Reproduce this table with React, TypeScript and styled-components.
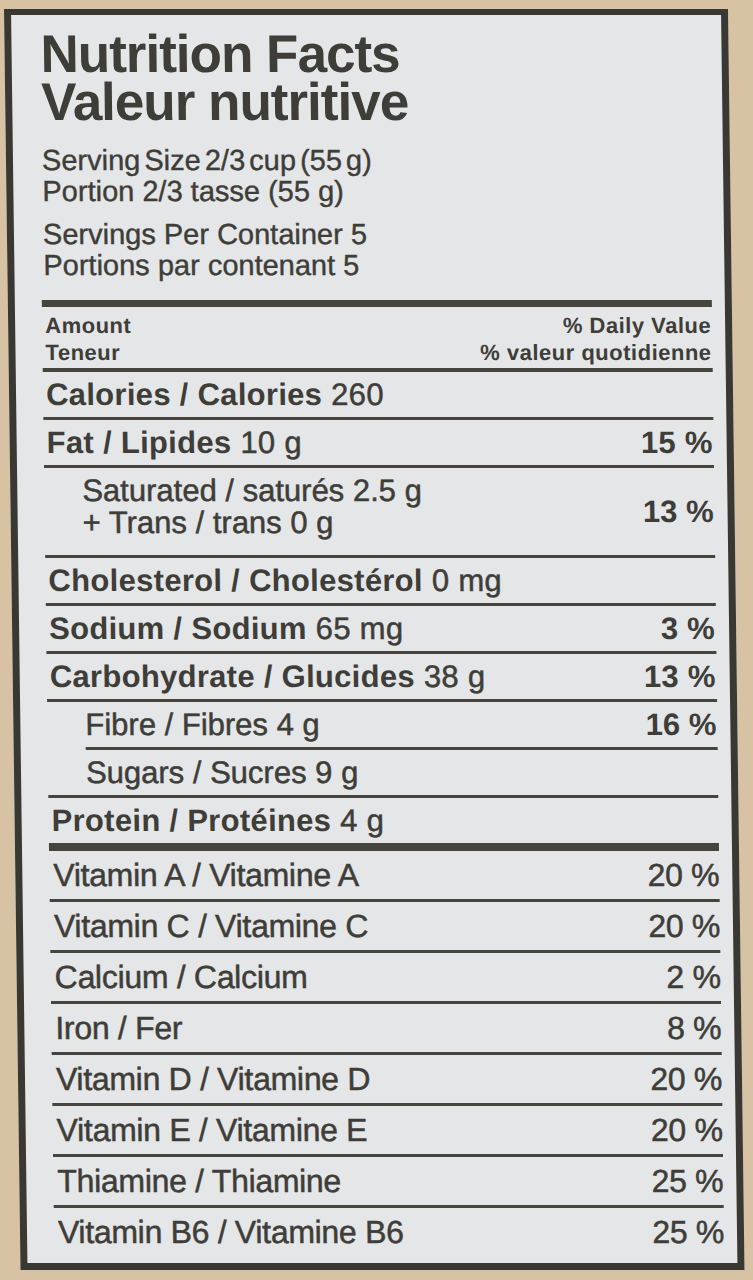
import React from "react";
import styled, { createGlobalStyle } from "styled-components";

const INK = "#3e3d38";

const GlobalStyle = createGlobalStyle`
  html, body { margin: 0; padding: 0; background: #d8c2a4; }
  body {
    font-family: "Liberation Sans", Arial, Helvetica, sans-serif;
    color: ${INK};
    -webkit-font-smoothing: antialiased;
  }
  * { box-sizing: border-box; }
`;

const Page = styled.div`
  width: 753px;
  height: 1280px;
  padding: 9px 0 0 4px;
  background: #d8c2a4;
  overflow: hidden;
`;

const Label = styled.section`
  width: 724px;
  height: 1261px;
  border-style: solid;
  border-color: #3a3832;
  border-width: 6px 7px 7px 7px;
  background: #e4e6e8;
  padding: 15px 13px 0 27px;
  display: flex;
  flex-direction: column;
  transform: skewX(0.75deg);
  transform-origin: 0 0;
`;

const Title = styled.h1`
  margin: 0;
  padding-left: 2px;
  font-size: 53px;
  line-height: 48px;
  font-weight: 700;
  letter-spacing: -1px;
`;

const Serving = styled.div<{ $gap: number }>`
  margin-top: ${(p) => p.$gap}px;
  padding-left: 2px;
  font-size: 29px;
  line-height: 31px;
  font-weight: 400;
  -webkit-text-stroke: 0.4px ${INK};
`;

const Line = styled.div<{ $tight?: boolean }>`
  white-space: nowrap;
  word-spacing: ${(p) => (p.$tight ? -4 : 0)}px;
`;

const Rule = styled.div<{ $h: number; $gap?: number; $indent?: boolean }>`
  flex: none;
  height: ${(p) => p.$h}px;
  margin-top: ${(p) => p.$gap ?? 0}px;
  margin-left: ${(p) => (p.$indent ? 38 : 0)}px;
  background: #45443e;
`;

const Header = styled.div`
  margin-top: 5px;
  margin-bottom: 2px;
  display: flex;
  justify-content: space-between;
  padding: 0 1px 0 3px;
  font-size: 22px;
  line-height: 27px;
  font-weight: 700;
  letter-spacing: 0.5px;
`;

const HeaderCol = styled.div<{ $right?: boolean }>`
  display: flex;
  flex-direction: column;
  align-items: ${(p) => (p.$right ? "flex-end" : "flex-start")};
`;

const NutrientRow = styled.div<{ $indent?: boolean; $double?: boolean }>`
  flex: none;
  display: flex;
  align-items: center;
  justify-content: space-between;
  height: ${(p) => (p.$double ? 87 : 45)}px;
  padding: 0 1px 0 ${(p) => (p.$indent ? 38 : 3)}px;
  font-size: 31px;
  letter-spacing: ${(p) => (p.$indent ? 0 : 0.3)}px;
  white-space: nowrap;
`;

const VitaminRow = styled.div`
  flex: none;
  display: flex;
  align-items: center;
  justify-content: space-between;
  height: 48px;
  padding: 0 0 0 4px;
  font-size: 32px;
  letter-spacing: -0.3px;
  white-space: nowrap;
  font-weight: 400;
  -webkit-text-stroke: 0.5px ${INK};
`;

const Name = styled.span`
  font-weight: 700;
`;

const Amount = styled.span`
  font-weight: 400;
  -webkit-text-stroke: 0.5px ${INK};
`;

const Pct = styled.span<{ $bold?: boolean }>`
  font-weight: ${(p) => (p.$bold ? 700 : 400)};
`;

const SubLines = styled.div`
  display: flex;
  flex-direction: column;
  line-height: 32px;
  padding-bottom: 10px;
  font-weight: 400;
  -webkit-text-stroke: 0.5px ${INK};
`;

type Nutrient = {
  name: string;
  amount: string;
  pct?: string;
};

const main: Nutrient[] = [
  { name: "Calories / Calories", amount: "260" },
  { name: "Fat / Lipides", amount: "10 g", pct: "15 %" },
];

const mid: Nutrient[] = [
  { name: "Cholesterol / Cholestérol", amount: "0 mg" },
  { name: "Sodium / Sodium", amount: "65 mg", pct: "3 %" },
  { name: "Carbohydrate / Glucides", amount: "38 g", pct: "13 %" },
];

const vitamins: [string, string][] = [
  ["Vitamin A / Vitamine A", "20 %"],
  ["Vitamin C / Vitamine C", "20 %"],
  ["Calcium / Calcium", "2 %"],
  ["Iron / Fer", "8 %"],
  ["Vitamin D / Vitamine D", "20 %"],
  ["Vitamin E / Vitamine E", "20 %"],
  ["Thiamine / Thiamine", "25 %"],
  ["Vitamin B6 / Vitamine B6", "25 %"],
];

function Main({ n }: { n: Nutrient }) {
  return (
    <NutrientRow>
      <span>
        <Name>{n.name} </Name>
        <Amount>{n.amount}</Amount>
      </span>
      {n.pct && <Pct $bold>{n.pct}</Pct>}
    </NutrientRow>
  );
}

export default function App() {
  return (
    <>
      <GlobalStyle />
      <Page>
        <Label>
          <Title>
            <Line>Nutrition Facts</Line>
            <Line>Valeur nutritive</Line>
          </Title>
          <Serving $gap={19}>
            <Line $tight>Serving Size 2/3 cup (55 g)</Line>
            <Line>Portion 2/3 tasse (55 g)</Line>
          </Serving>
          <Serving $gap={12}>
            <Line>Servings Per Container 5</Line>
            <Line>Portions par contenant 5</Line>
          </Serving>
          <Rule $h={7} $gap={19} />
          <Header>
            <HeaderCol>
              <span>Amount</span>
              <span>Teneur</span>
            </HeaderCol>
            <HeaderCol $right>
              <span>% Daily Value</span>
              <span>% valeur quotidienne</span>
            </HeaderCol>
          </Header>
          <Rule $h={4} />
          {main.map((n) => (
            <React.Fragment key={n.name}>
              <Main n={n} />
              <Rule $h={3} />
            </React.Fragment>
          ))}
          <NutrientRow $indent $double>
            <SubLines>
              <span>Saturated / saturés 2.5 g</span>
              <span>+ Trans / trans 0 g</span>
            </SubLines>
            <Pct $bold>13 %</Pct>
          </NutrientRow>
          <Rule $h={3} />
          {mid.map((n) => (
            <React.Fragment key={n.name}>
              <Main n={n} />
              <Rule $h={3} />
            </React.Fragment>
          ))}
          <NutrientRow $indent>
            <Amount>Fibre / Fibres 4 g</Amount>
            <Pct $bold>16 %</Pct>
          </NutrientRow>
          <Rule $h={3} $indent />
          <NutrientRow $indent>
            <Amount>Sugars / Sucres 9 g</Amount>
          </NutrientRow>
          <Rule $h={3} />
          <Main n={{ name: "Protein / Protéines", amount: "4 g" }} />
          <Rule $h={8} />
          {vitamins.map(([name, pct], i) => (
            <React.Fragment key={name}>
              {i > 0 && <Rule $h={3} />}
              <VitaminRow>
                <span>{name}</span>
                <Pct>{pct}</Pct>
              </VitaminRow>
            </React.Fragment>
          ))}
        </Label>
      </Page>
    </>
  );
}
